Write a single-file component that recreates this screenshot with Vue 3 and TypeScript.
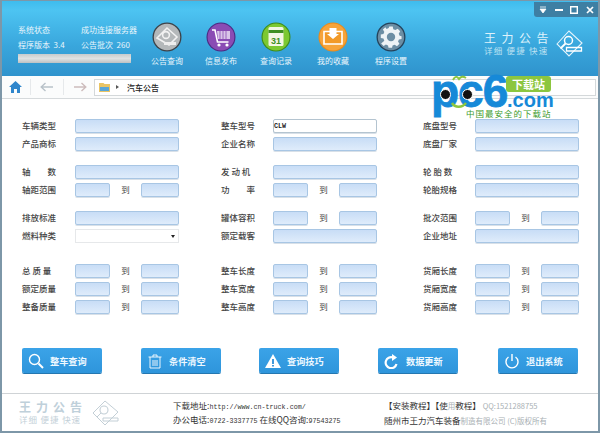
<script setup lang="ts">
interface Field { kind: 'text' | 'range' | 'select' | 'active'; label: string; value?: string }

const navItems = [
  { key: 'search', label: '公告查询' },
  { key: 'cart', label: '信息发布' },
  { key: 'cal', label: '查询记录' },
  { key: 'fav', label: '我的收藏' },
  { key: 'gear', label: '程序设置' },
]

const groups: Field[][][] = [
  [
    [{ kind: 'text', label: '车辆类型' }, { kind: 'active', label: '整车型号', value: 'CLW' }, { kind: 'text', label: '底盘型号' }],
    [{ kind: 'text', label: '产品商标' }, { kind: 'text', label: '企业名称' }, { kind: 'text', label: '底盘厂家' }],
  ],
  [
    [{ kind: 'text', label: '轴　　数' }, { kind: 'text', label: '发 动 机' }, { kind: 'text', label: '轮 胎 数' }],
    [{ kind: 'range', label: '轴距范围' }, { kind: 'range', label: '功　　率' }, { kind: 'text', label: '轮胎规格' }],
  ],
  [
    [{ kind: 'text', label: '排放标准' }, { kind: 'range', label: '罐体容积' }, { kind: 'range', label: '批次范围' }],
    [{ kind: 'select', label: '燃料种类' }, { kind: 'text', label: '额定载客' }, { kind: 'text', label: '企业地址' }],
  ],
  [
    [{ kind: 'range', label: '总 质 量' }, { kind: 'range', label: '整车长度' }, { kind: 'range', label: '货厢长度' }],
    [{ kind: 'range', label: '额定质量' }, { kind: 'range', label: '整车宽度' }, { kind: 'range', label: '货厢宽度' }],
    [{ kind: 'range', label: '整备质量' }, { kind: 'range', label: '整车高度' }, { kind: 'range', label: '货厢高度' }],
  ],
]

const buttons = [
  { key: 'search', label: '整车查询' },
  { key: 'trash', label: '条件清空' },
  { key: 'warn', label: '查询技巧' },
  { key: 'refresh', label: '数据更新' },
  { key: 'power', label: '退出系统' },
]
</script>

<template>
  <div class="win">
    <header class="head">
      <div class="status">
        <div class="st-row"><span class="st-a">系统状态</span><span>成功连接服务器</span></div>
        <div class="st-row"><span class="st-a">程序版本 &nbsp;3.4</span><span>公告批次 &nbsp;260</span></div>
        <div class="progress"></div>
      </div>
      <nav class="nav">
        <div v-for="n in navItems" :key="n.key" class="nav-item">
          <svg width="30" height="30" viewBox="0 0 30 30">
            <template v-if="n.key === 'search'">
              <circle cx="15" cy="15" r="14.5" fill="#3c4248" />
              <circle cx="15" cy="15" r="13.2" fill="#b4b8ba" />
              <path d="M5 16 15 6l10 9-8 8z" fill="none" stroke="#f2f2f2" stroke-width="1.6" />
              <circle cx="14" cy="13" r="3.4" fill="none" stroke="#f2f2f2" stroke-width="1.6" />
              <path d="M12 20h12v3H12z" fill="#eee" />
            </template>
            <template v-else-if="n.key === 'cart'">
              <circle cx="15" cy="15" r="14.5" fill="#4a2a82" />
              <circle cx="15" cy="15" r="13.4" fill="#8a4cb4" />
              <path d="M6 8h3l2.500 12h11" fill="none" stroke="#fff" stroke-width="1.600" />
              <path d="M11 9h13v8H12z" fill="#d9c4e8" />
              <path d="M14 9v8M17 9v8M20 9v8" stroke="#8a4cb4" stroke-width=".8" />
              <circle cx="13" cy="23" r="1.600" fill="#fff" /><circle cx="21" cy="23" r="1.600" fill="#fff" />
            </template>
            <template v-else-if="n.key === 'cal'">
              <circle cx="15" cy="15" r="14.5" fill="#3c8a1c" />
              <circle cx="15" cy="15" r="13.4" fill="#7cc832" />
              <rect x="7.500" y="5" width="15" height="19" rx="1.500" fill="#f3f6e4" />
              <rect x="7.500" y="8" width="15" height="3" fill="#3f8f22" />
              <text x="15" y="21.500" class="cal">31</text>
            </template>
            <template v-else-if="n.key === 'fav'">
              <circle cx="15" cy="15" r="14.5" fill="#e88a1c" />
              <circle cx="15" cy="15" r="13.4" fill="#f6a43a" />
              <path d="M6 9.500h18V22H6z" fill="#f29a28" stroke="#fff" stroke-width="1.600" />
              <path d="M11.500 6h7v6h2.500L15 17l-6-5h2.500z" fill="#fff" />
            </template>
            <template v-else>
              <circle cx="15" cy="15" r="14.500" fill="#24425a" />
              <circle cx="15" cy="15" r="13.200" fill="#6c8ea4" />
              <path d="M13 5h4l.6 3 2.400 1 2.600-1.600 2.800 2.800L23.800 13l1 2.400 2.200.6v3l-3 .6-1 2.400 1.600 2.400-2.800 2.800-2.600-1.600-2.400 1-.6 2.400h-4l-.6-2.600-2.400-1-2.600 1.600-2.800-2.800L7.400 21l-1-2.400-3-.6v-4l3-.6 1-2.400-1.600-2.600 2.800-2.800L10 7.600l2.400-1z" transform="translate(1.800 .2) scale(.88)" fill="#eef3f6" />
              <circle cx="15" cy="15" r="4.200" fill="#6c8ea4" />
            </template>
          </svg>
          <span>{{ n.label }}</span>
        </div>
      </nav>
      <div class="brand">
        <div class="brand-text">
          <div class="brand-title">王力公告</div>
          <div class="brand-sub">详细 便捷 快速</div>
        </div>
        <svg class="brand-mark" width="27" height="27" viewBox="0 0 27 27">
          <path d="M1 14 13 1l13 12-13 13z" fill="none" stroke="#e6f4fb" stroke-width="1.100" />
          <circle cx="12.500" cy="10.500" r="4" fill="none" stroke="#fff" stroke-width="1.500" />
          <path d="M9.500 13.500 4.500 18.500" stroke="#fff" stroke-width="1.800" />
          <path d="M10.500 17.500h15v3.500h-15z" fill="none" stroke="#fff" stroke-width="1.300" />
        </svg>
      </div>
      <div class="winctl">
        <svg width="8" height="8" viewBox="0 0 8 8"><path d="M1 1h6M1 3h6L4 7z" fill="#fff" stroke="#fff" stroke-width=".8" /></svg>
        <svg width="8" height="8" viewBox="0 0 8 8"><path d="M0 4h8" stroke="#fff" stroke-width="2" /></svg>
        <svg width="8" height="8" viewBox="0 0 8 8"><path d="M.7.7h6.600v6.600H.7z" fill="none" stroke="#fff" stroke-width="1.400" /></svg>
        <svg width="8" height="8" viewBox="0 0 8 8"><path d="m1 1 6 6M7 1 1 7" stroke="#fff" stroke-width="1.700" /></svg>
      </div>
    </header>

    <div class="toolbar">
      <svg class="t-home" width="13" height="12" viewBox="0 0 13 12"><path d="M6.500 0 13 6h-2v6H8V8H5v4H2V6H0z" fill="#2f86cc" /></svg>
      <i class="sep s1"></i>
      <svg class="t-back" width="14" height="10" viewBox="0 0 14 10"><path d="M5.500 1 1.200 5l4.300 4M1.200 5H13" fill="none" stroke="#b9c2c9" stroke-width="1.400" /></svg>
      <i class="sep s2"></i>
      <svg class="t-fwd" width="14" height="10" viewBox="0 0 14 10"><path d="M8.500 1 12.800 5 8.500 9M12.800 5H1" fill="none" stroke="#cdbcbc" stroke-width="1.400" /></svg>
      <div class="addr">
        <svg width="11" height="10" viewBox="0 0 11 10"><path d="M0 1h4.500l1 1H11v8H0z" fill="#e9c464" /><path d="M1 5h9v4H1z" fill="#59a6d8" /></svg>
        <span class="addr-arrow"></span>
        <span class="addr-text">汽车公告</span>
      </div>
    </div>

    <main class="form">
      <div v-for="(g, gi) in groups" :key="gi" class="group">
        <div v-for="(row, ri) in g" :key="ri" class="row">
          <div v-for="f in row" :key="f.label" class="cell">
            <label>{{ f.label }}</label>
            <div v-if="f.kind === 'range'" class="range">
              <span class="inp short"></span>
              <span class="to">到</span>
              <span class="inp short"></span>
            </div>
            <div v-else-if="f.kind === 'select'" class="select"><i></i></div>
            <div v-else-if="f.kind === 'active'" class="inp active">{{ f.value }}</div>
            <div v-else class="inp"></div>
          </div>
        </div>
      </div>
      <div class="actions">
        <button v-for="b in buttons" :key="b.key" type="button">
          <svg width="16" height="16" viewBox="0 0 16 16" fill="none" stroke="#fff" stroke-width="1.400">
            <template v-if="b.key === 'search'"><circle cx="6.500" cy="6.500" r="5" /><path d="m10.500 10.500 4.500 4.500" stroke-width="2" /></template>
            <template v-else-if="b.key === 'trash'"><path d="M1.500 4h13M6 4V2h4v2M3 4v11h10V4M6 7v6M8 7v6M10 7v6" stroke-width=".9" /></template>
            <template v-else-if="b.key === 'warn'"><path d="M8 1 16 15H0z" fill="#fff" stroke="none" /><path d="M8 6v5M8 12v1.500" stroke="#2f8fd8" stroke-width="1.800" /></template>
            <template v-else-if="b.key === 'refresh'"><path d="M12.500 11A5.500 5.500 0 1 1 9 4.500" stroke-width="2.200" /><path d="M8 1l5 3.500L8 8z" fill="#fff" stroke="none" /></template>
            <template v-else><path d="M4.500 4a6 6 0 1 0 7 0M8 1v7" /></template>
          </svg>
          <span>{{ b.label }}</span>
        </button>
      </div>
    </main>

    <footer class="foot">
      <div class="foot-brand">
        <div class="fb-text">
          <div class="fb-title">王力公告</div>
          <div class="fb-sub">详细 便捷 快速</div>
        </div>
        <svg width="27" height="26" viewBox="0 0 27 26">
          <path d="M1 13 13 1l13 11-13 13z" fill="none" stroke="#c3cfd6" stroke-width="1" />
          <circle cx="12" cy="10" r="4" fill="none" stroke="#c3cfd6" stroke-width="1.100" />
          <path d="M9 13 5 17M11 18h15v3H11z" fill="none" stroke="#c3cfd6" stroke-width="1" />
        </svg>
      </div>
      <div class="foot-mid">
        <div>下载地址:<span class="mono">http://www.cn-truck.com/</span></div>
        <div>办公电话:<span class="mono">0722-3337775</span> 在线QQ咨询:<span class="mono">97543275</span></div>
      </div>
      <div class="foot-right">
        <div>【安装教程】【使<span class="fade">用</span>教程】 <span class="fade">QQ:1521288755</span></div>
        <div>随州市王力汽车装备<span class="fade">制造有限公司 (C)版权所有</span></div>
      </div>
    </footer>

    <div class="pc6">
      <div class="pc6-main">pc6</div>
      <svg class="pc6-deco" width="18" height="34" viewBox="0 0 18 34">
        <path d="M3 6C5 2 7 2 9 5 11 2 13 2 16 4" fill="none" stroke="#8cc63f" stroke-width="2" />
        <path d="M2 29c3 5 10 5 14 0" fill="none" stroke="#8cc63f" stroke-width="2.500" />
      </svg>
      <i class="eye e1"></i><i class="eye e2"></i>
      <div class="pc6-badge">下载站</div>
      <div class="pc6-com">.com</div>
      <div class="pc6-sub">中国最安全的下载站</div>
    </div>
  </div>
</template>

<style>
html, body { margin: 0; background: #fff; }
</style>

<style scoped>
.win {
  position: relative;
  width: 600px;
  height: 433px;
  box-sizing: border-box;
  overflow: hidden;
  background: #fff;
  border: 1px solid #7d97a8;
  border-width: 1px 2px 2px 2px;
  font-family: "Noto Sans CJK SC", "Liberation Sans", sans-serif;
  display: flex;
  flex-direction: column;
}
.head {
  position: relative;
  height: 75px;
  flex: none;
  display: flex;
  color: #eaf6fc;
  background: linear-gradient(#3ebcee 0%, #4dc4f2 12%, #39a6dc 60%, #2f93cd 100%);
}
.status { width: 131px; padding: 21px 0 0 16px; font-size: 8px; box-sizing: border-box; flex: none; }
.st-row { display: flex; height: 15px; line-height: 15px; white-space: nowrap; }
.st-a { width: 63px; flex: none; }
.progress { width: 113px; height: 9px; margin-top: 2px; background: linear-gradient(#c8cccd, #e0e2e2 50%, #bcc1c3); }
.nav { display: flex; margin-left: 18px; padding-top: 21px; }
.nav-item { width: 32px; display: flex; flex-direction: column; align-items: center; gap: 3px; font-size: 8px; white-space: nowrap; line-height: 12px; }
.nav-item + .nav-item { margin-left: 22px; }
.nav-item:nth-child(3) { margin-left: 23px; }
.nav-item:nth-child(4) { margin-left: 25px; }
.nav-item:nth-child(5) { margin-left: 26px; }
.cal { font: bold 9px "Liberation Sans", sans-serif; fill: #3f8f22; text-anchor: middle; }
.brand { position: absolute; left: 482px; top: 30px; display: flex; }
.brand-text { width: 72px; }
.brand-mark { margin-top: -1px; }
.brand-title { font-size: 12px; letter-spacing: 5.500px; line-height: 13px; color: #dff2fb; white-space: nowrap; }
.brand-sub { font-size: 8.500px; letter-spacing: 1.200px; line-height: 12px; color: #bfe3f3; white-space: nowrap; }
.winctl {
  position: absolute;
  right: 0;
  top: 1px;
  width: 64px;
  height: 15px;
  box-sizing: border-box;
  padding: 0 4px 0 5px;
  display: flex;
  align-items: center;
  justify-content: space-between;
  background: #3e7fa3;
  border-radius: 0 0 0 3px;
}
.toolbar {
  height: 22px;
  flex: none;
  display: flex;
  align-items: center;
  background: #fbfcfc;
  border-bottom: 1px solid #d6dadc;
  padding-left: 7px;
}
.sep { width: 1px; height: 16px; background: #e6e9eb; flex: none; }
.s1 { margin-left: 8px; }
.t-back { margin-left: 9px; }
.s2 { margin-left: 9px; }
.t-fwd { margin-left: 9px; }
.addr {
  margin-left: 7px;
  width: 502px;
  height: 17px;
  box-sizing: border-box;
  background: #fff;
  border: 1px solid #d4d8da;
  display: flex;
  align-items: center;
  padding-left: 4px;
}
.addr-arrow { width: 0; height: 0; border: 2px solid transparent; border-left: 3px solid #555; margin-left: 6px; }
.addr-text { margin-left: 6px; font-size: 8px; font-weight: 500; color: #222; }
.form { flex: 1; padding: 20px 0 0 20px; }
.group { display: flex; flex-direction: column; gap: 4px; margin-bottom: 14px; }
.group:nth-child(3) { margin-bottom: 21px; }
.row { display: flex; height: 14px; }
.cell { width: 199px; display: flex; align-items: center; flex: none; }
.cell:nth-child(2) { width: 202px; }
.cell:nth-child(3) { width: 156px; }
.cell label { width: 53px; flex: none; font-size: 8.500px; line-height: 12px; padding-bottom: 2px; color: #444; white-space: nowrap; font-weight: 500; }
.cell:nth-child(n + 2) label { width: 52px; }
.inp {
  display: block;
  width: 104px;
  height: 14px;
  box-sizing: border-box;
  border: 1px solid #a8c6e4;
  border-radius: 2px;
  background: linear-gradient(#c8ddf6, #dfecfb);
  box-shadow: 0 1px 0 #d8e0e8;
}
.inp.short { width: 35px; }
.inp.short:last-child { width: 38px; }
.active { background: #fff; border-color: #b4c4d0; font: bold 6.700px/12px "Liberation Mono", monospace; padding-left: 0; color: #222; }
.range { display: flex; align-items: center; width: 104px; }
.to { width: 31px; text-align: center; font-size: 8.500px; line-height: 12px; padding-bottom: 2px; color: #444; }
.select {
  width: 104px;
  height: 14px;
  box-sizing: border-box;
  background: #fff;
  border: 1px solid #e6e8ea;
  position: relative;
}
.select i { position: absolute; right: 3px; top: 5px; border: 2.500px solid transparent; border-top: 3px solid #222; border-bottom: 0; }
.actions { display: flex; gap: 39px; margin-top: 34px; }
button {
  width: 80px;
  height: 25px;
  padding: 0 0 0 6px;
  margin: 0;
  border: 0;
  border-radius: 2px;
  background: linear-gradient(#3ba3e8, #2e95db);
  box-shadow: 0 1px 0 #2477b0;
  color: #eef8ff;
  font: 700 9.200px "Noto Sans CJK SC", sans-serif;
  display: flex;
  align-items: center;
  gap: 6px;
  flex: none;
}
.actions button:nth-child(3) { margin-left: -1px; }
.actions button:nth-child(5) { margin-left: 1px; }
.foot {
  height: 38px;
  flex: none;
  border-top: 1px solid #cfd3d6;
  display: flex;
  font-size: 8.500px;
  color: #333;
  line-height: 14px;
  box-sizing: border-box;
  padding-top: 4px;
}
.foot-brand { width: 151px; padding-left: 17px; display: flex; box-sizing: border-box; margin-right: 20px; flex: none; margin-top: 2px; }
.fb-text { width: 73px; flex: none; }
.fb-title { font-size: 12px; letter-spacing: 5px; line-height: 13px; color: #bfd0da; white-space: nowrap; font-weight: 700; }
.fb-sub { font-size: 8.500px; line-height: 12px; letter-spacing: .9px; color: #c3d0d8; white-space: nowrap; }
.foot-mid { width: 211px; flex: none; white-space: nowrap; }
.mono { font: 6.700px "Liberation Mono", monospace; }
.foot-right { white-space: nowrap; font-size: 8.500px; }
.fade { color: #a9b0b4; font-size: 7.500px; }
.pc6 { position: absolute; left: 429px; top: 71px; width: 122px; height: 46px; pointer-events: none; }
.pc6-main { position: absolute; left: 0; top: 2px; font: 700 46px/34px "Liberation Sans", sans-serif; color: #1689d8; letter-spacing: -1px; white-space: nowrap; -webkit-text-stroke: .8px #1689d8; }
.pc6-deco { position: absolute; left: 19px; top: 2px; }
.eye { position: absolute; width: 9px; height: 9px; border-radius: 50%; background: #111; border: 1px solid #fff; top: 17px; }
.e1 { left: 9px; }
.e2 { left: 31px; }
.pc6-badge {
  position: absolute;
  left: 75px;
  top: 4px;
  width: 45px;
  height: 16px;
  border-radius: 3px;
  background: #8cc63f;
  color: #fff;
  font: 700 11px/16px "Noto Sans CJK SC", sans-serif;
  text-align: center;
}
.pc6-com { position: absolute; left: 76px; top: 21px; font: 700 20px/14px "Liberation Sans", sans-serif; color: #1689d8; }
.pc6-sub { position: absolute; left: 35px; top: 36px; font-size: 8.500px; letter-spacing: 1px; line-height: 10px; color: #3b9a2a; white-space: nowrap; }
</style>
